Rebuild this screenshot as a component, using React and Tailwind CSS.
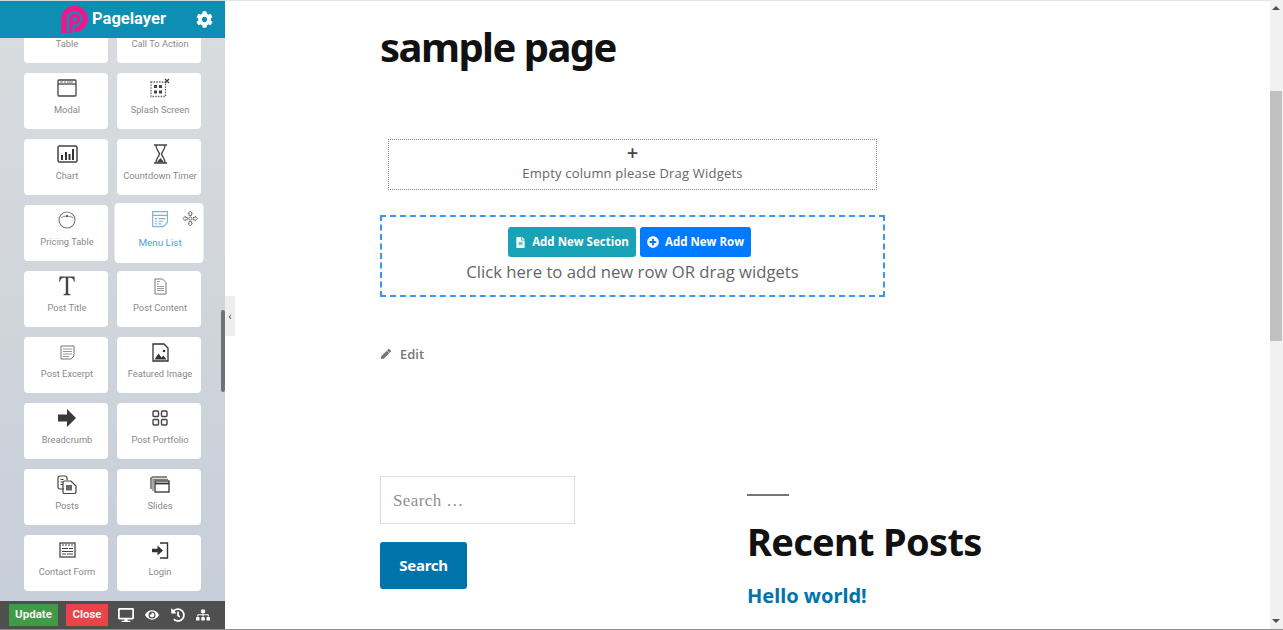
import React from "react";
import { FaCog, FaDesktop, FaEye, FaHistory, FaSitemap, FaFileAlt, FaPlusCircle, FaPen } from "react-icons/fa";

const S = ({ children, w = 24, h = 24, vb = "0 0 24 24" }) => (
  <svg width={w} height={h} viewBox={vb} fill="none" stroke="#444" strokeWidth="1.3">{children}</svg>
);

const icons = {
  none: null,
  modal: <S w={20} h={18} vb="0 0 20 18"><rect x="1" y="1" width="18" height="16" rx="1" /><path d="M1 5h18" /><path d="M3 3h3M7 3h2M10 3h6" strokeWidth="1" stroke="#777" /></S>,
  splash: <S w={20} h={20} vb="0 0 20 20"><rect x="1" y="4" width="14.5" height="14.5" strokeDasharray="1.5 1.2" stroke="#666" /><path d="M15 1l4 4M19 1l-4 4" /><g fill="#444" stroke="none"><rect x="4" y="7" width="3" height="3" /><rect x="9" y="7" width="3" height="3" /><rect x="4" y="12.5" width="3" height="3" /><rect x="9" y="12.5" width="3" height="3" /></g></S>,
  chart: <S w={21} h={18} vb="0 0 21 18"><rect x="1" y="1" width="19" height="16" rx="1.5" strokeWidth="1.5" /><g fill="#333" stroke="none"><rect x="4" y="10" width="2" height="5" /><rect x="8" y="7" width="2" height="8" /><rect x="11.5" y="9" width="2" height="6" /><rect x="15" y="4" width="2" height="11" /></g></S>,
  timer: <S w={15} h={20} vb="0 0 15 20"><path d="M1 1h13M1 19h13" strokeWidth="1.6" /><path d="M3 1c0 5 3 6.500 3.500 9C6 12.500 3 14 3 19M12 1c0 5-3 6.500-3.500 9 .5 2.500 3.500 4 3.500 9" /><path d="M4 18.500c1-2.500 3-3.500 3.500-4.500.5 1 2.500 2 3.500 4.500z" fill="#444" stroke="none" /></S>,
  pricing: <S w={18} h={18} vb="0 0 18 18"><circle cx="9" cy="9" r="8" stroke="#777" strokeWidth="1.100" /><path d="M3 7c2-2.500 10-2.500 12 0" stroke="#888" strokeWidth="1" /><path d="M8 5h2" stroke="#444" strokeWidth="1.300" /></S>,
  menu: <S w={16} h={16} vb="0 0 16 16"><path d="M1 1h14v10l-4 4H1z" stroke="#7fb2dc" strokeWidth="1.100" /><path d="M1 4.500h14M3 7.500h2M6.500 7.500h6.500M3 10h2M6.500 10h4.500M3 12.500h2M6.500 12.500h2.500" stroke="#7fb2dc" strokeWidth="1.100" /></S>,
  title: <svg width="16" height="20" viewBox="0 0 16 20"><path d="M0.500 0.500h15l.3 5h-1c-.4-2.500-1.300-3.700-3.800-3.700H9.200v14.700c0 1.200.5 1.600 2.300 1.700v1H4.500v-1c1.800-.1 2.300-.5 2.300-1.700V1.800H5c-2.500 0-3.400 1.200-3.800 3.700h-1z" fill="#444" /></svg>,
  content: <S w={13} h={17} vb="0 0 13 17"><path d="M1 1h7.500L12 4.500V16H1z" stroke="#777" strokeWidth="1" /><path d="M3 3.500h3M3 6h2M3 8.500h7M3 10.500h7M3 12.500h7" stroke="#999" strokeWidth="1" /></S>,
  excerpt: <S w={15} h={15} vb="0 0 15 15"><path d="M1 1h13v10l-3 3H1z" stroke="#777" strokeWidth="1" /><path d="M3 4h9M3 6.500h9M3 9h9M3 11.500h6" stroke="#999" strokeWidth="1" /></S>,
  image: <S w={17} h={19} vb="0 0 17 19"><path d="M1 1h11l4 4v13H1z" strokeWidth="1.300" stroke="#333" /><circle cx="12" cy="8" r="1.300" fill="#333" stroke="none" /><path d="M2.500 16.500l4-6 3 4 2-2 3 4z" fill="#333" stroke="none" /></S>,
  arrow: <svg width="18" height="18" viewBox="0 0 18 18"><path d="M0 5.500h9V0l9 9-9 9v-5.500H0z" fill="#3a3a3a" /></svg>,
  portfolio: <S w={16} h={16} vb="0 0 16 16"><rect x="1" y="1" width="5.500" height="5.500" rx="1" strokeWidth="1.400" /><rect x="9.500" y="1" width="5.500" height="5.500" rx="1" strokeWidth="1.400" /><rect x="1" y="9.500" width="5.500" height="5.500" rx="1" strokeWidth="1.400" /><rect x="9.500" y="9.500" width="5.500" height="5.500" rx="1" strokeWidth="1.400" /></S>,
  posts: <S w={20} h={19} vb="0 0 20 19"><path d="M7 14H3a2 2 0 0 1-2-2V3a2 2 0 0 1 2-2h5a2 2 0 0 1 2 2v2" strokeWidth="1.200" /><path d="M3.500 4.500h3M3.500 7h2.500M3.500 9.500h2.500" strokeWidth="1" /><path d="M7.500 6h6.500l5 5v6a1.500 1.500 0 0 1-1.500 1.500h-10A1.500 1.500 0 0 1 6 17V7.500A1.500 1.500 0 0 1 7.500 6z" strokeWidth="1.200" /><path d="M9 10h6v5.500H9z" fill="#666" stroke="none" /></S>,
  slides: <S w={20} h={17} vb="0 0 20 17"><path d="M1 13V2l2-1h14" stroke="#666" strokeWidth="1.500" /><path d="M3 15V3.500h15" stroke="#8a7a6a" /><rect x="5" y="5" width="14" height="11" stroke="#333" fill="#fff" /><path d="M5 7.500h14" strokeWidth="1.800" stroke="#333" /></S>,
  form: <S w={17} h={16} vb="0 0 17 16"><rect x="1" y="1" width="15" height="14" /><path d="M3 3h2M6 3h2M9 3h2M12 3h2" strokeWidth="1" /><path d="M3 6.500h6M10 6.500h4M3 9.500h11M3 12h4M8 12h6" strokeWidth="1" /></S>,
  login: <svg width="17" height="17" viewBox="0 0 17 17" fill="none"><path d="M8 1h7.500v15H8" stroke="#333" strokeWidth="1.400" /><path d="M0 6.800h5.500V3.500L11 8.500l-5.500 5v-3.300H0z" fill="#333" /></svg>,
};

const rows = [
  [["Table", "none"], ["Call To Action", "none"]],
  [["Modal", "modal"], ["Splash Screen", "splash"]],
  [["Chart", "chart"], ["Countdown Timer", "timer"]],
  [["Pricing Table", "pricing"], ["Menu List", "menu", true]],
  [["Post Title", "title"], ["Post Content", "content"]],
  [["Post Excerpt", "excerpt"], ["Featured Image", "image"]],
  [["Breadcrumb", "arrow"], ["Post Portfolio", "portfolio"]],
  [["Posts", "posts"], ["Slides", "slides"]],
  [["Contact Form", "form"], ["Login", "login"]],
];

function Card({ label, icon, hover }) {
  return (
    <div className={`relative flex h-[56px] w-[84px] flex-col items-center rounded-[4px] bg-white pl-[2px] ${hover ? "scale-x-[1.06] scale-y-[1.07]" : ""}`}>
      <div className="flex h-[29px] w-full items-center justify-center pt-[1px]">{icons[icon]}</div>
      <div className={`mt-[1px] whitespace-nowrap text-[9.300px] leading-[14px] ${hover ? "text-[#4b9fe1]" : "text-[#8a8a8a]"}`}>{label}</div>
      {hover && (
        <svg className="absolute right-[5px] top-[7px]" width="15" height="15" viewBox="0 0 16 16" fill="#fff" stroke="#666" strokeWidth="0.9">
          <path d="M8 .6l2.200 2.400H9.200v2h-2.400v-2H5.800zM8 15.400l2.200-2.400H9.200v-2h-2.400v2H5.800zM.6 8L3 5.800v1h2v2.400H3v1zM15.400 8L13 5.800v1h-2v2.400h2v1z" />
          <circle cx="8" cy="8" r="1.600" />
        </svg>
      )}
    </div>
  );
}

export default function App() {
  return (
    <div className="flex h-[630px] w-[1283px] overflow-hidden bg-white" style={{ fontFamily: "'Open Sans', sans-serif" }}>
      <aside className="relative z-10 flex h-full w-[225px] shrink-0 flex-col bg-gradient-to-b from-[#dadcde] to-[#c6ced9]" style={{ fontFamily: "Roboto, sans-serif" }}>
        <header className="z-10 flex h-[38px] shrink-0 items-center border-t border-[#d5d5d5] bg-[#0e8eb2] pl-[61px] pr-[12px]">
          <svg width="27" height="27" viewBox="0 0 27 27" className="mr-[4px]">
            <path d="M3 27V13A10.500 10.500 0 1 1 13.500 23.500" fill="none" stroke="#f0168c" strokeWidth="5.500" />
            <path fillRule="evenodd" d="M8.300 27V13a5.500 5.500 0 1 1 5.500 5.500h-2.300V27zM13.800 11a2.200 2.200 0 1 0 0 4.400 2.200 2.200 0 0 0 0-4.400z" fill="#f0168c" />
          </svg>
          <span className="text-[16.500px] font-bold leading-none text-white">Pagelayer</span>
          <FaCog className="ml-auto text-[17px] text-white" />
        </header>
        <div className="relative min-h-0 flex-1 overflow-hidden">
          <div className="-mt-[31px] grid grid-cols-[84px_84px] gap-x-[9px] gap-y-[10px] pl-[24px]">
            {rows.flat().map(([l, i, h]) => (
              <Card key={l} label={l} icon={i} hover={h} />
            ))}
            <div className="h-[56px] w-[84px] rounded-[4px] bg-white" />
            <div className="h-[56px] w-[84px] rounded-[4px] bg-white" />
          </div>
          <div className="absolute right-0 top-[272px] h-[82px] w-[4px] rounded-[2px] bg-[#6f7377]" />
        </div>
        <footer className="z-10 flex h-[29px] shrink-0 items-center border-b border-[#8a8a8a] bg-[#4f4f4f] pl-[9px]">
          <button className="h-[22px] w-[49px] bg-[#3f9b45] text-[11.500px] font-bold text-[#f2f2f2]">Update</button>
          <button className="ml-[8px] h-[22px] w-[42px] bg-[#ea4448] text-[11.500px] font-bold text-[#f2f2f2]">Close</button>
          <FaDesktop className="ml-[10px] text-[16px] text-white" />
          <FaEye className="ml-[11px] text-[14px] text-white" />
          <FaHistory className="ml-[12px] text-[14px] text-white" />
          <FaSitemap className="ml-[11px] text-[14px] text-white" />
        </footer>
        <div className="absolute left-full top-[296px] flex h-[40px] w-[10px] items-center justify-center bg-[#eeeeee] text-[11px] leading-none text-[#444]">‹</div>
      </aside>

      <main className="flex min-w-0 flex-1 flex-col border-t border-b border-t-[#e2e2e2] border-b-[#8f8f8f] pl-[155px]">
        <h1 className="mt-[21px] text-[40px] font-bold leading-[50px] tracking-[-1.550px] text-[#111]" style={{ fontFamily: "'Noto Sans', sans-serif" }}>sample page</h1>
        <section className="ml-[8px] mt-[67px] flex h-[51px] w-[489px] flex-col items-center border border-dotted border-[#8a8a8a] pt-[3px] text-[#666]">
          <div className="text-[20px] font-semibold leading-[20px] text-[#444]">+</div>
          <div className="text-[13px] leading-[20px] tracking-[0.200px]">Empty column please Drag Widgets</div>
        </section>
        <section className="mt-[25px] flex h-[82px] w-[505px] flex-col items-center border-2 border-dashed border-[#3b97f3] pt-[10px]">
          <div className="mr-[6px] flex gap-[4px]">
            <button className="flex h-[30px] w-[128px] items-center justify-center gap-[6px] rounded-[3px] bg-[#17a2b8] text-[11.500px] font-bold text-white">
              <FaFileAlt className="text-[11px]" />Add New Section
            </button>
            <button className="flex h-[30px] w-[111px] items-center justify-center gap-[6px] rounded-[3px] bg-[#007bff] text-[11.500px] font-bold text-white">
              <FaPlusCircle className="text-[12px]" />Add New Row
            </button>
          </div>
          <div className="mt-[3px] text-[16.700px] leading-[24px] text-[#666]">Click here to add new row OR drag widgets</div>
        </section>
        <div className="mt-[47px] flex items-center gap-[9px] text-[13px] font-semibold leading-[20px] text-[#767676]">
          <FaPen className="ml-[1px] text-[10px]" />Edit
        </div>
        <div className="mt-[112px] flex">
          <div className="w-[367px] shrink-0">
            <div className="flex h-[48px] w-[195px] items-center border border-[#dddddd] px-[12px] pb-[0px] pt-[2px] text-[17px] tracking-[0.4px] text-[#909090]" style={{ fontFamily: "'Liberation Serif', serif" }}>Search …</div>
            <button className="mt-[18px] h-[47px] w-[87px] rounded-[3px] bg-[#0073aa] text-[15px] font-bold tracking-[-0.300px] text-white" style={{ fontFamily: "'Noto Sans', sans-serif" }}>Search</button>
          </div>
          <div style={{ fontFamily: "'Noto Sans', sans-serif" }}>
            <div className="mt-[18px] h-[2px] w-[42px] bg-[#767676]" />
            <h2 className="ml-[0px] mt-[20px] text-[38px] font-bold leading-[50px] tracking-[-0.700px] text-[#111]">Recent Posts</h2>
            <div className="mt-[16px] text-[20px] font-bold leading-[28px] text-[#0073aa]">Hello world!</div>
          </div>
        </div>
      </main>

      <div className="flex h-full w-[13px] shrink-0 flex-col items-center border-b border-[#8f8f8f] bg-[#f1f1f1] pr-[1px]">
        <div className="mt-[6px] h-0 w-0 border-x-[4px] border-b-[4px] border-x-transparent border-b-[#505050]" />
        <div className="mt-[81px] h-[250px] w-full bg-[#c1c1c1]" />
        <div className="mt-auto mb-[6px] h-0 w-0 border-x-[4px] border-t-[4px] border-x-transparent border-t-[#505050]" />
      </div>
    </div>
  );
}
